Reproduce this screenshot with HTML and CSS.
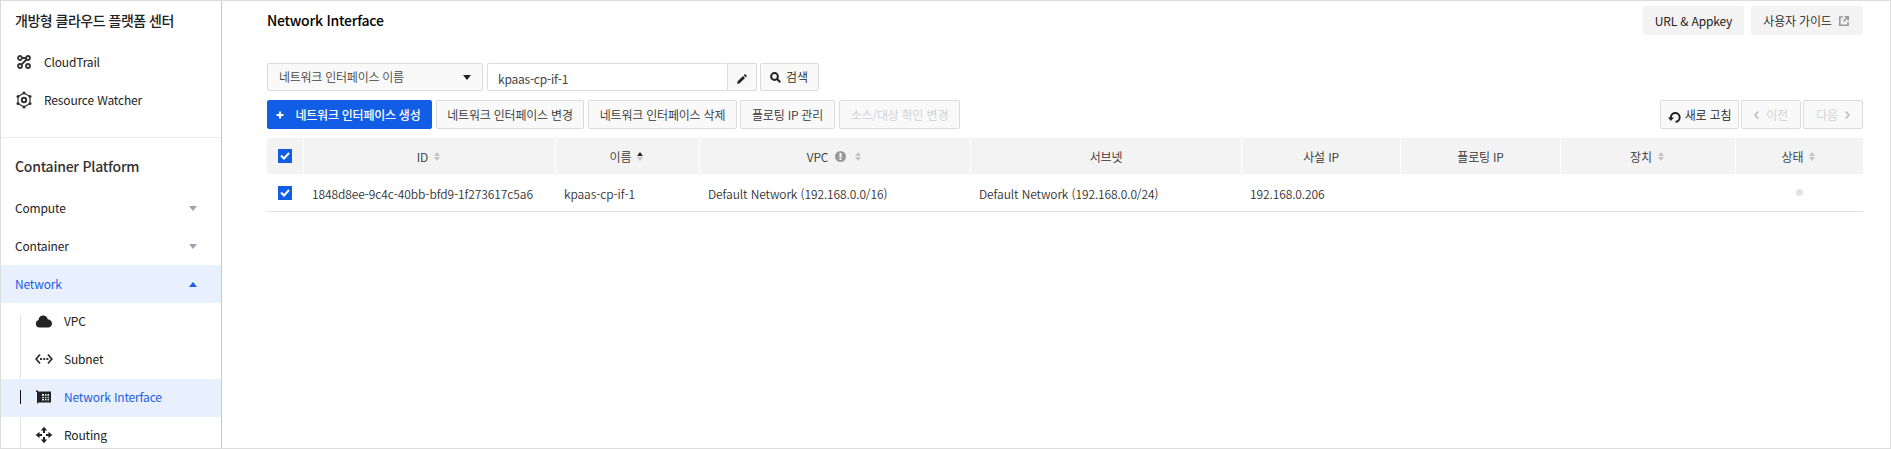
FILE: index.html
```html
<!DOCTYPE html>
<html lang="ko">
<head>
<meta charset="utf-8">
<title>Network Interface</title>
<link rel="stylesheet" href="styles.css">
</head>
<body>
<div class="app">
  <nav class="sidebar">
    <h2 class="org">개방형 클라우드 플랫폼 센터</h2>
    <a class="item"><svg class="ico" width="18" height="18" viewBox="0 0 18 18" fill="none" stroke="#333" stroke-width="1.8"><circle cx="5" cy="5" r="2"/><circle cx="13" cy="5" r="2"/><circle cx="5" cy="13" r="2"/><circle cx="13" cy="13" r="2"/><path d="M7 5h4M11.600 6.500L6.500 11.500"/></svg>CloudTrail</a>
    <a class="item"><svg class="ico" width="18" height="18" viewBox="0 0 18 18" fill="none" stroke="#333"><path stroke-width="1.200" d="M9 2l6 3.500v7L9 16l-6-3.500v-7z"/><circle cx="9" cy="9" r="2.200" stroke-width="2"/><g fill="#333" stroke="none"><circle cx="9" cy="2" r="1.500"/><circle cx="15" cy="5.500" r="1.500"/><circle cx="15" cy="12.500" r="1.500"/><circle cx="9" cy="16" r="1.500"/><circle cx="3" cy="12.500" r="1.500"/><circle cx="3" cy="5.500" r="1.500"/></g></svg>Resource Watcher</a>
    <h3 class="project">Container Platform</h3>
    <a class="group">Compute<i class="caret"></i></a>
    <a class="group">Container<i class="caret"></i></a>
    <a class="group open">Network<i class="caret"></i></a>
    <div class="children">
      <a class="child"><svg class="ico" width="18" height="16" viewBox="0 0 18 16"><path fill="#222" d="M4.500 14.500a3.800 3.800 0 0 1-1-7.400C3.800 4.200 5.600 2.500 8 2.500c2.500 0 4.300 1.600 4.800 3.800 2.600.3 4.200 2 4.200 4.200s-1.500 4-4 4z"/></svg>VPC</a>
      <a class="child"><svg class="ico" width="18" height="16" viewBox="0 0 18 16" fill="none" stroke="#333" stroke-width="1.800"><path d="M5 3.500L1.200 8 5 12.500M13 3.500L16.800 8 13 12.500"/><path stroke-dasharray="2 1.200" d="M5 8h8.400"/></svg>Subnet</a>
      <a class="child on"><svg class="ico" width="18" height="16" viewBox="0 0 18 16"><path fill="#222" d="M1 1.500h2v1h13v11H3v1H2V3H1z"/><path fill="#d5deee" d="M7 5h2v2H7zM10 5h1.500v2H10zM12.500 5H14v2h-1.500zM7 8h2v1.200H7zM10 8h1.500v1.200H10zM12.500 8H14v1.200h-1.500zM7 10h2v1.500H7zM10 10h1.500v1.500H10zM12.500 10H14v1.500h-1.500z"/></svg>Network Interface</a>
      <a class="child"><svg class="ico" width="18" height="18" viewBox="0 0 18 18"><path fill="#222" d="M9 .8l3.200 3.700H10V7H8V4.500H5.800zM9 17.200l3.200-3.700H10V11H8v2.500H5.800zM.8 9l3.700-3.200V8H7v2H4.500v2.200zM17.200 9l-3.700-3.200V8H11v2h2.500v2.200z"/></svg>Routing</a>
    </div>
  </nav>
  <main class="main">
    <header class="top">
      <h1 class="title">Network Interface</h1>
      <div class="links">
        <button class="link appkey">URL &amp; Appkey</button>
        <button class="link guide">사용자 가이드<svg width="10" height="10" viewBox="0 0 10 10" fill="none" stroke="#999" stroke-width="1.600"><path d="M4 1H.8v8.200H9V6M5.500.8h3.700v3.700M9 1L4.500 5.500"/></svg></button>
      </div>
    </header>
    <div class="search">
      <div class="select">네트워크 인터페이스 이름<i class="arrow"></i></div>
      <div class="input">kpaas-cp-if-1</div>
      <button class="edit"><svg width="10" height="10" viewBox="0 0 10 10"><path fill="#222" d="M0 10l.7-2.700L6 2l2 2-5.300 5.300zM6.700 1.300L8 0l2 2-1.300 1.300z"/></svg></button>
      <button class="find"><svg width="11" height="11" viewBox="0 0 11 11" fill="none" stroke="#222" stroke-width="2"><circle cx="4.500" cy="4.500" r="3.400"/><path d="M7 7l3.300 3.300"/></svg>검색</button>
    </div>
    <div class="actions">
      <button class="btn primary"><svg width="8" height="8" viewBox="0 0 8 8" stroke="#fff" stroke-width="2"><path d="M4 .5v7M.5 4h7"/></svg>네트워크 인터페이스 생성</button>
      <button class="btn w148">네트워크 인터페이스 변경</button>
      <button class="btn w149">네트워크 인터페이스 삭제</button>
      <button class="btn w95">플로팅 IP 관리</button>
      <button class="btn w121 off">소스/대상 확인 변경</button>
      <div class="pager">
        <button class="btn refresh"><svg class="turn" width="13" height="12" viewBox="0 0 13 12"><path fill="none" stroke="#222" stroke-width="2" d="M2.900 7.500V5.800a4.400 4.400 0 1 1 4.600 5"/><path fill="#222" d="M0 6.500h6L2.900 10z"/></svg>새로 고침</button>
        <button class="btn step off"><svg width="5" height="8" viewBox="0 0 5 8" fill="none" stroke="#bbb" stroke-width="1.600"><path d="M4.300.5L1 4l3.300 3.500"/></svg>이전</button>
        <button class="btn step off">다음<svg width="5" height="8" viewBox="0 0 5 8" fill="none" stroke="#bbb" stroke-width="1.600"><path d="M.7.500L4 4 .7 7.500"/></svg></button>
      </div>
    </div>
    <div class="grid head">
      <div><span class="check"><svg width="10" height="8" viewBox="0 0 10 8" fill="none" stroke="#fff" stroke-width="2"><path d="M1 3.500l3 3L9 1"/></svg></span></div>
      <div>ID<i class="sort"></i></div>
      <div>이름<i class="sort asc"></i></div>
      <div>VPC<svg class="info" width="11" height="11" viewBox="0 0 11 11"><circle cx="5.500" cy="5.500" r="5.500" fill="#999"/><path fill="#fff" d="M4.500 2h2v4.500h-2zM4.500 7.300h2V9h-2z"/></svg><i class="sort"></i></div>
      <div>서브넷</div>
      <div>사설 IP</div>
      <div>플로팅 IP</div>
      <div>장치<i class="sort"></i></div>
      <div>상태<i class="sort"></i></div>
    </div>
    <div class="grid row">
      <div class="mid"><span class="check"><svg width="10" height="8" viewBox="0 0 10 8" fill="none" stroke="#fff" stroke-width="2"><path d="M1 3.500l3 3L9 1"/></svg></span></div>
      <div>1848d8ee-9c4c-40bb-bfd9-1f273617c5a6</div>
      <div>kpaas-cp-if-1</div>
      <div>Default Network (192.168.0.0/16)</div>
      <div>Default Network (192.168.0.0/24)</div>
      <div>192.168.0.206</div>
      <div></div>
      <div></div>
      <div class="mid"><i class="dot"></i></div>
    </div>
  </main>
</div>
</body>
</html>
```
FILE: styles.css
```css
* { box-sizing: border-box; }
body { margin: 0; font-family: "Noto Sans CJK KR", "Noto Sans", sans-serif; font-size: 12px; letter-spacing: -.16px; line-height: 18px; color: #222; background: #fff; }
h1, h2, h3 { margin: 0; font-weight: 500; }
button { font: inherit; letter-spacing: inherit; color: inherit; margin: 0; padding: 0; border: 0; white-space: nowrap; }
svg { flex: none; display: block; }
.app { display: flex; width: 1891px; height: 449px; border: 1px solid #dcdcdc; overflow: hidden; }
.sidebar { width: 221px; flex: none; border-right: 1px solid #c6c7cb; overflow: hidden; height: 447px; }
.org { font-size: 14px; letter-spacing: -.5px; padding: 9px 0 0 14px; height: 42px; line-height: 20px; white-space: nowrap; }
.item { display: flex; align-items: center; height: 38px; padding-left: 14px; }
.item .ico { margin-right: 11px; }
.project { margin-top: 18px; border-top: 1px solid #e9eaec; padding: 17px 0 0 14px; height: 52px; font-size: 14px; letter-spacing: -.25px; line-height: 22px; color: #333; }
.group { display: flex; align-items: center; justify-content: space-between; height: 38px; padding: 0 24px 0 14px; }
.open { background: #e8f0fe; color: #1a5ee5; }
.caret { border: 4px solid transparent; border-top: 5px solid #9ea3ad; border-bottom: 0; }
.open .caret { border-top: 0; border-bottom: 5px solid #1a5ee5; }
.children { background: linear-gradient(#e3e5e8, #e3e5e8) 19px 11px / 1px 200px no-repeat; }
.child { display: flex; align-items: center; height: 38px; padding: 0 0 2px 34px; }
.child .ico { margin-right: 11px; }
.on { color: #1a5ee5; background: linear-gradient(#111, #111) 19px 11px / 1px 14px no-repeat, #e8f0fe; }
.main { flex: 1; padding: 5px 27px 0 45px; }
.top { display: flex; justify-content: space-between; height: 57px; }
.title { font-size: 14px; letter-spacing: -.25px; line-height: 20px; padding-top: 4px; color: #000; }
.links { display: flex; gap: 7px; }
.link { height: 29px; background: #f3f3f3; border-radius: 2px; display: flex; align-items: center; justify-content: center; }
.appkey { width: 101px; }
.guide { width: 112px; gap: 7px; padding-right: 2px; font-weight: 350; }
.search { display: flex; height: 28px; font-weight: 350; }
.select { width: 216px; border: 1px solid #dcdcdc; background: #f9f9f9; border-radius: 2px; display: flex; align-items: center; justify-content: space-between; padding: 0 11px; letter-spacing: -.25px; color: #444; margin-right: 4px; }
.arrow { border: 4px solid transparent; border-top: 5px solid #222; border-bottom: 0; }
.input { width: 241px; border: 1px solid #dcdcdc; border-radius: 2px 0 0 2px; padding: 6px 10px 4px; letter-spacing: -.22px; font-weight: 400; color: #444; }
.edit { width: 29px; background: #f9f9f9; border: 1px solid #dcdcdc; border-left: 0; display: flex; align-items: center; justify-content: center; margin-right: 3px; padding-top: 4px; }
.find { width: 59px; background: #f9f9f9; border: 1px solid #dcdcdc; border-radius: 2px; display: flex; align-items: center; justify-content: center; gap: 5px; padding-right: 1px; }
.actions { display: flex; margin-top: 9px; height: 29px; gap: 4px; }
.btn { height: 29px; border: 1px solid #dcdcdc; border-radius: 2px; background: #f9f9f9; font-weight: 350; letter-spacing: -.2px; padding-top: 1px; color: #333; display: flex; align-items: center; justify-content: center; }
.primary { width: 165px; padding-right: 3px; background: #125de6; border-color: #125de6; color: #fff; font-weight: 500; letter-spacing: -.25px; gap: 12px; }
.w148 { width: 148px; }
.w149 { width: 149px; margin-right: -1px; }
.w95 { width: 95px; }
.w121 { width: 121px; }
.btn.off { color: #d0d0d0; }
.pager { display: flex; gap: 2px; margin-left: auto; }
.refresh { width: 79px; gap: 4px; color: #222; }
.turn { margin-top: 3px; }
.step { width: 60px; gap: 7px; }
.grid { display: grid; grid-template-columns: 36px 251px 143px 270px 270px 158px 159px 174px 127px; column-gap: 1px; }
.head { margin-top: 9px; }
.head > div { height: 36px; background: #f3f3f3; display: flex; align-items: center; justify-content: center; padding-top: 1px; color: #333; font-weight: 350; }
.head > div:first-child { padding: 0; }
.row { height: 38px; border-bottom: 1px solid #e0e0e0; }
.row > div { display: flex; align-items: center; padding: 2px 0 0 8px; color: #333; font-weight: 350; letter-spacing: -.09px; white-space: nowrap; }
.row > .mid { justify-content: center; padding: 0; }
.check { width: 14px; height: 14px; background: #125de6; display: flex; align-items: center; justify-content: center; }
.sort { display: flex; flex-direction: column; align-items: center; gap: 1px; margin: 0 2px 0 6px; width: 6px; }
.sort::before, .sort::after { content: ""; width: 0; height: 0; border: 3px solid transparent; }
.sort::before { border-bottom: 4px solid #c4c4c4; border-top: 0; }
.sort::after { border-top: 4px solid #c4c4c4; border-bottom: 0; }
.asc::before { border-bottom-color: #222; }
.info { margin: 0 3px 0 7px; }
.dot { width: 7px; height: 7px; border-radius: 50%; background: #e2e2e2; }
```
